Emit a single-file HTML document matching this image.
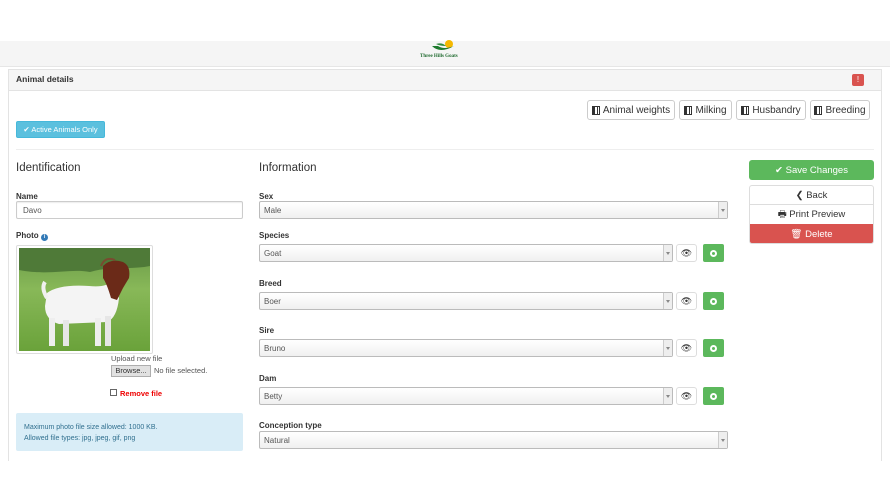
<!DOCTYPE html>
<html><head><style>
*{box-sizing:border-box;margin:0;padding:0}
body{width:890px;height:500px;background:#fff;font-family:"Liberation Sans",sans-serif;position:relative;overflow:hidden;color:#333}
.a{position:absolute}
.top{left:0;top:41px;width:890px;height:26px;background:#f5f5f5;border-bottom:1px solid #e6e6e6}
.panel{left:8px;top:69px;width:874px;height:392px;border:1px solid #e3e3e3;border-bottom:none}
.ph{left:9px;top:70px;width:872px;height:21px;background:#f5f5f5;border-bottom:1px solid #e3e3e3}
.btn{position:absolute;border:1px solid #ccc;border-radius:3px;background:#fff;font-size:10px;display:flex;align-items:center;justify-content:center;gap:3px;color:#333}
.ic{display:inline-block;width:8px;height:9px;border:1.5px solid #333;background:linear-gradient(90deg,#333 0 2px,transparent 2px 4px,#333 4px 5px,transparent 5px);}
.lbl{position:absolute;font-size:8px;font-weight:bold;color:#333}
.inp{position:absolute;border:1px solid #ccc;border-radius:2px;background:#fff;font-size:8px;color:#555;padding-left:8px;display:flex;align-items:center;box-shadow:inset 0 1px 1px rgba(0,0,0,.075)}
.sel{position:absolute;border:1px solid #bbb;border-radius:2px;background:linear-gradient(#fff,#f0f0f0);font-size:8px;color:#555;padding-left:4px;display:flex;align-items:center}
.sel:after{content:"";position:absolute;right:0;top:0;width:8px;height:100%;border-left:1px solid #ccc;background:#eee}
.sel i{position:absolute;right:2px;top:7px;border:2px solid transparent;border-top:3px solid #888;z-index:1}
.eye{position:absolute;width:21px;height:18px;border:1px solid #ddd;border-radius:3px;background:#fff;font-size:9px;display:flex;align-items:center;justify-content:center}
.plus{position:absolute;width:21px;height:18px;border-radius:2px;background:#5cb85c;display:flex;align-items:center;justify-content:center}
.plus b{width:7px;height:7px;border-radius:50%;background:#fff;position:relative}
.plus b:after{content:"";position:absolute;left:2px;top:2px;width:3px;height:3px;background:#5cb85c;border-radius:50%}
</style></head><body>
<div class="a top"></div>
<div class="a" style="left:430px;top:40px;width:28px;height:14px">
<svg width="28" height="14"><circle cx="19" cy="4" r="4" fill="#f5b800"/><path d="M2 6 Q10 14 24 6 Q14 10 8 6Z" fill="#1e7a2e"/><path d="M6 4 Q12 2 16 6 Q10 6 6 4Z" fill="#2e8b3e"/></svg></div>
<div class="a" style="left:420px;top:54px;font-size:5px;color:#1e6a2e;font-weight:bold;font-family:'Liberation Serif',serif">Three Hills Goats</div>
<div class="a panel"></div>
<div class="a ph"></div>
<div class="a" style="left:16px;top:74px;font-size:8.5px;font-weight:bold">Animal details</div>
<div class="a" style="left:852px;top:74px;width:12px;height:12px;background:#d9534f;border-radius:2px;color:#fff;font-size:8px;text-align:center;line-height:12px">!</div>
<div class="btn" style="left:587px;top:100px;width:88px;height:20px"><span class="ic"></span>Animal weights</div>
<div class="btn" style="left:679px;top:100px;width:53px;height:20px"><span class="ic"></span>Milking</div>
<div class="btn" style="left:736px;top:100px;width:70px;height:20px"><span class="ic"></span>Husbandry</div>
<div class="btn" style="left:810px;top:100px;width:60px;height:20px"><span class="ic"></span>Breeding</div>
<div class="a" style="left:16px;top:121px;width:89px;height:17px;background:#5bc0de;border:1px solid #46b8da;border-radius:2px;color:#fff;font-size:7.5px;display:flex;align-items:center;justify-content:center">✔ Active Animals Only</div>
<div class="a" style="left:16px;top:149px;width:858px;height:1px;background:#eee"></div>
<div class="a" style="left:16px;top:162px;font-size:11.5px;color:#333">Identification</div>
<div class="a" style="left:259px;top:162px;font-size:11.5px;color:#333">Information</div>
<div class="lbl" style="left:16px;top:192px">Name</div>
<div class="inp" style="left:16px;top:201px;width:227px;height:18px;padding-left:6px">Davo</div>
<div class="lbl" style="left:16px;top:231px">Photo <span style="display:inline-block;width:7px;height:7px;border-radius:50%;background:#337ab7;color:#fff;font-size:5px;text-align:center;line-height:7px">i</span></div>
<div class="a" style="left:16px;top:245px;width:137px;height:109px;border:1px solid #ddd;border-radius:2px;padding:2px">
<svg width="131" height="103" viewBox="0 0 131 103"><defs><linearGradient id="g" x1="0" y1="0" x2="0" y2="1"><stop offset="0" stop-color="#6a9a48"/><stop offset=".4" stop-color="#88b858"/><stop offset="1" stop-color="#6aa23a"/></linearGradient></defs><rect width="131" height="103" fill="url(#g)"/><path d="M0 0h131v18c-20 4-40 0-60 6-20-4-40 4-71-2z" fill="#4f7a38"/>
<path d="M28 45 Q40 36 70 38 Q88 40 94 32 L100 50 Q98 70 88 74 L40 76 Q26 72 26 58Z" fill="#f4f4f4"/>
<path d="M84 18 Q92 10 104 14 Q112 18 110 30 L104 40 Q100 48 98 52 L92 50 Q88 36 84 30Z" fill="#6b2a18"/>
<path d="M82 18 Q86 8 96 12" stroke="#7a4a30" stroke-width="2" fill="none"/>
<rect x="30" y="70" width="6" height="28" fill="#eee"/><rect x="44" y="72" width="6" height="26" fill="#e6e6e6"/><rect x="76" y="70" width="6" height="28" fill="#eee"/><rect x="86" y="68" width="6" height="30" fill="#e6e6e6"/>
<path d="M28 50 Q22 40 26 34" stroke="#f0f0f0" stroke-width="4" fill="none"/></svg></div>
<div class="a" style="left:111px;top:354px;font-size:7.5px;color:#555">Upload new file</div>
<div class="a" style="left:111px;top:365px;width:40px;height:12px;background:#e1e1e1;border:1px solid #adadad;font-size:7.5px;text-align:center;line-height:10px">Browse...</div>
<div class="a" style="left:154px;top:366px;font-size:7.5px;color:#555">No file selected.</div>
<div class="a" style="left:110px;top:389px;width:7px;height:7px;border:1px solid #666"></div>
<div class="a" style="left:120px;top:389px;font-size:7.5px;color:#e00;font-weight:bold">Remove file</div>
<div class="a" style="left:16px;top:413px;width:227px;height:38px;background:#d9edf7;border-radius:2px;color:#31708f;font-size:7px;padding:9px 8px;line-height:11px">Maximum photo file size allowed: 1000 KB.<br>Allowed file types: jpg, jpeg, gif, png</div>
<div class="lbl" style="left:259px;top:192px">Sex</div>
<div class="sel" style="left:259px;top:201px;width:469px;height:18px">Male<i></i></div>
<div class="lbl" style="left:259px;top:231px">Species</div>
<div class="sel" style="left:259px;top:244px;width:414px;height:18px">Goat<i></i></div>
<div class="eye" style="left:676px;top:244px">👁</div><div class="plus" style="left:703px;top:244px"><b></b></div>
<div class="lbl" style="left:259px;top:279px">Breed</div>
<div class="sel" style="left:259px;top:292px;width:414px;height:18px">Boer<i></i></div>
<div class="eye" style="left:676px;top:292px">👁</div><div class="plus" style="left:703px;top:292px"><b></b></div>
<div class="lbl" style="left:259px;top:326px">Sire</div>
<div class="sel" style="left:259px;top:339px;width:414px;height:18px">Bruno<i></i></div>
<div class="eye" style="left:676px;top:339px">👁</div><div class="plus" style="left:703px;top:339px"><b></b></div>
<div class="lbl" style="left:259px;top:374px">Dam</div>
<div class="sel" style="left:259px;top:387px;width:414px;height:18px">Betty<i></i></div>
<div class="eye" style="left:676px;top:387px">👁</div><div class="plus" style="left:703px;top:387px"><b></b></div>
<div class="lbl" style="left:259px;top:421px">Conception type</div>
<div class="sel" style="left:259px;top:431px;width:469px;height:18px">Natural<i></i></div>
<div class="a" style="left:749px;top:160px;width:125px;height:20px;background:#5cb85c;border-radius:3px;color:#fff;font-size:9.5px;display:flex;align-items:center;justify-content:center">✔ Save Changes</div>
<div class="a" style="left:749px;top:185px;width:125px;height:59px;border:1px solid #ddd;border-radius:3px;overflow:hidden">
<div style="height:19px;font-size:9.5px;display:flex;align-items:center;justify-content:center;border-bottom:1px solid #ddd">❮ Back</div>
<div style="height:19px;font-size:9.5px;display:flex;align-items:center;justify-content:center">🖶 Print Preview</div>
<div style="height:20px;font-size:9.5px;background:#d9534f;color:#fff;display:flex;align-items:center;justify-content:center">🗑 Delete</div></div>
</body></html>
